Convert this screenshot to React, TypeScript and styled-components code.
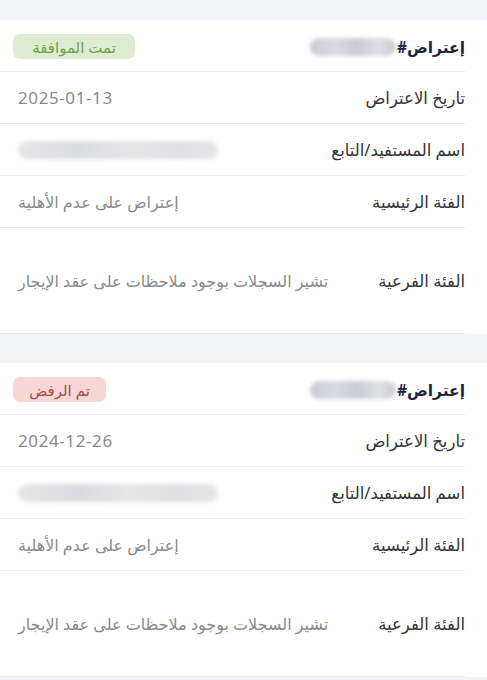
import React from "react";
import styled, { createGlobalStyle, css } from "styled-components";

const GlobalStyle = createGlobalStyle`
  html, body {
    margin: 0;
    padding: 0;
    background: #f4f5f8;
  }
  body {
    font-family: "Noto Sans", "DejaVu Sans", sans-serif;
  }
`;

type Status = "approved" | "rejected";

interface Objection {
  date: string;
  status: Status;
  mainCategory: string;
  subCategory: string;
}

const objections: Objection[] = [
  {
    date: "2025-01-13",
    status: "approved",
    mainCategory: "إعتراض على عدم الأهلية",
    subCategory: "تشير السجلات بوجود ملاحظات على عقد الإيجار",
  },
  {
    date: "2024-12-26",
    status: "rejected",
    mainCategory: "إعتراض على عدم الأهلية",
    subCategory: "تشير السجلات بوجود ملاحظات على عقد الإيجار",
  },
];

function App() {
  return (
    <>
      <GlobalStyle />
      <Page dir="rtl">
        {objections.map((item, i) => (
          <Card key={i}>
            <HeaderRow>
              <Title>
                إعتراض#
                <Redacted $width={86} $tone="#c3c6cf" />
              </Title>
              <Badge $status={item.status}>
                {item.status === "approved" ? "تمت الموافقة" : "تم الرفض"}
              </Badge>
            </HeaderRow>
            <Row>
              <Label>تاريخ الاعتراض</Label>
              <Value $latin>{item.date}</Value>
            </Row>
            <Row>
              <Label>اسم المستفيد/التابع</Label>
              <Redacted $width={200} $tone="#e3e3e5" />
            </Row>
            <Row>
              <Label>الفئة الرئيسية</Label>
              <Value>{item.mainCategory}</Value>
            </Row>
            <Row $tall>
              <Label>الفئة الفرعية</Label>
              <Value>{item.subCategory}</Value>
            </Row>
          </Card>
        ))}
      </Page>
    </>
  );
}

const Page = styled.div`
  display: flex;
  flex-direction: column;
  gap: 29px;
  padding-top: 20px;
  background: #f4f5f8;
`;

const Card = styled.section`
  background: #ffffff;
  padding-right: 22px;
  display: flex;
  flex-direction: column;
`;

const Row = styled.div<{ $tall?: boolean }>`
  display: flex;
  align-items: center;
  justify-content: space-between;
  height: ${(p) => (p.$tall ? "105px" : "51px")};
  padding-left: 18px;
  border-bottom: 1px solid #e9e9ec;
`;

const HeaderRow = styled(Row)`
  padding-left: 13px;
  padding-top: 2px;
  height: 49px;
`;

const Title = styled.h2`
  margin: 0;
  display: flex;
  align-items: center;
  gap: 1px;
  font-size: 15.5px;
  font-weight: 700;
  color: #1d2742;
`;

const Label = styled.span`
  font-size: 16.5px;
  color: #333333;
`;

const Value = styled.span<{ $latin?: boolean }>`
  font-size: 16px;
  color: #8a8a8a;
  ${(p) =>
    p.$latin &&
    css`
      direction: ltr;
      font-size: 17px;
      letter-spacing: 0.6px;
    `}
`;

const Badge = styled.span<{ $status: Status }>`
  display: inline-flex;
  align-items: center;
  justify-content: center;
  height: 25px;
  border-radius: 7px;
  font-size: 15px;
  ${(p) =>
    p.$status === "approved"
      ? css`
          background: #ddecd2;
          color: #6ea245;
          width: 122px;
        `
      : css`
          background: #f6d6d6;
          color: #a94a48;
          width: 93px;
        `}
`;

const Redacted = styled.span<{ $width: number; $tone: string }>`
  display: inline-block;
  width: ${(p) => p.$width}px;
  height: 18px;
  border-radius: 9px;
  background: linear-gradient(
    90deg,
    ${(p) => p.$tone} 0%,
    #d6d8dd 30%,
    ${(p) => p.$tone} 55%,
    #dcdde1 80%,
    ${(p) => p.$tone} 100%
  );
  filter: blur(2px);
  opacity: 0.9;
`;

export default App;
